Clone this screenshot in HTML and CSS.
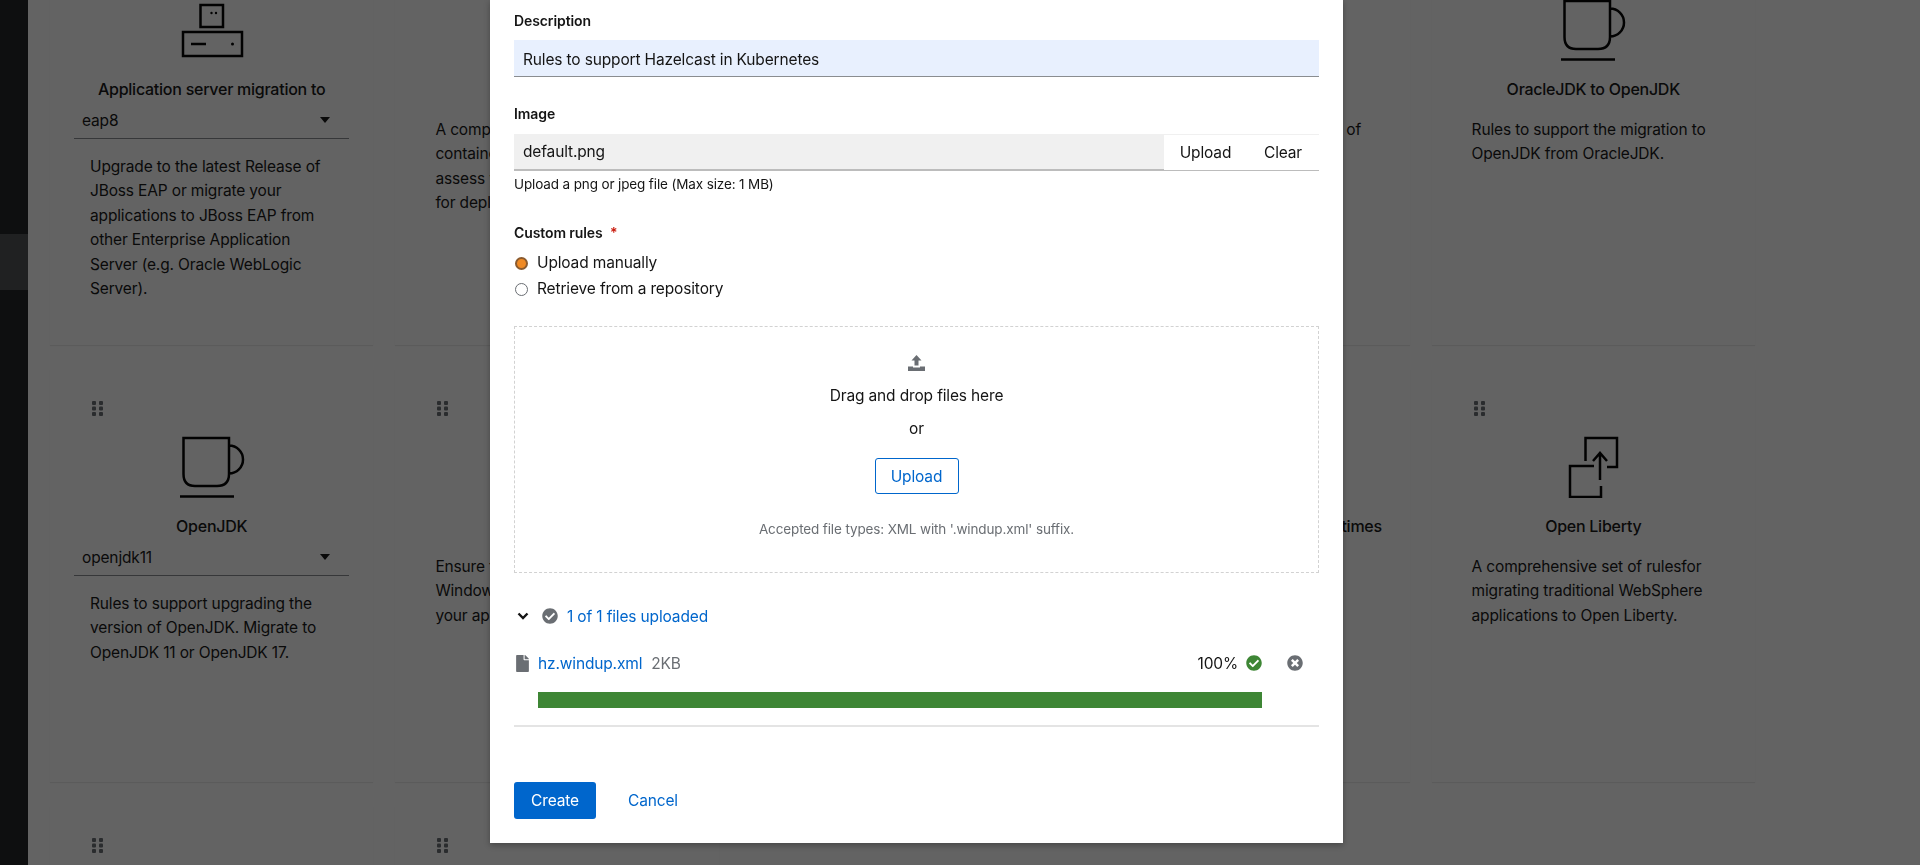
FILE: index.html
```html
<!DOCTYPE html>
<html lang="en">
<head>
    <meta charset="UTF-8">
    <meta name="viewport" content="width=device-width, initial-scale=1.0">
    <title>Create custom migration target</title>
    <link rel="stylesheet" href="styles.css">
</head>
<body>
    <svg class="sprites" width="0" height="0" aria-hidden="true">
        <symbol id="grip" viewBox="0 0 11 15">
            <rect x="0" y="0" width="4" height="4" rx="1"/><rect x="7" y="0" width="4" height="4" rx="1"/>
            <rect x="0" y="5.500" width="4" height="4" rx="1"/><rect x="7" y="5.500" width="4" height="4" rx="1"/>
            <rect x="0" y="11" width="4" height="4" rx="1"/><rect x="7" y="11" width="4" height="4" rx="1"/>
        </symbol>
        <symbol id="cup" viewBox="0 0 66 62">
            <path d="M4.500 2H50V38Q50 50 38 50H16Q4.500 50 4.500 38Z M50 9.500A14 14 0 0 1 50 37.500 M1 60.500H55" fill="none" stroke="#000" stroke-width="2.500"/>
        </symbol>
        <symbol id="server" viewBox="0 0 66 62">
            <path d="M21.500 6H44V28H21.500Z M4 33H63V57H4Z M12 45H27" fill="none" stroke="#000" stroke-width="2.500"/>
            <circle cx="32.500" cy="14" r="1.200"/><circle cx="37" cy="14" r="1.200"/><circle cx="53.500" cy="45" r="1.500"/>
        </symbol>
        <symbol id="liberty" viewBox="0 0 66 62">
            <path d="M25.500 25V2H57V31H47 M34 30H10V61H41V50 M40 44V17 M33 25L40 17L47 25" fill="none" stroke="#000" stroke-width="2.500"/>
        </symbol>
        <symbol id="check-circle" viewBox="0 0 512 512">
            <path d="M504 256c0 136.967-111.033 248-248 248S8 392.967 8 256 119.033 8 256 8s248 111.033 248 248zM227.314 387.314l184-184c6.248-6.248 6.248-16.379 0-22.627l-22.627-22.627c-6.248-6.249-16.379-6.249-22.628 0L216 308.118l-70.059-70.059c-6.248-6.248-16.379-6.248-22.628 0l-22.627 22.627c-6.248 6.248-6.248 16.379 0 22.627l104 104c6.249 6.249 16.379 6.249 22.628.001z"/>
        </symbol>
    </svg>

    <aside class="sidebar">
        <div class="nav-current"></div>
    </aside>

    <main class="gallery">
        <article class="card">
            <svg class="grip"><use href="#grip"/></svg>
            <svg class="card-icon"><use href="#server"/></svg>
            <h3>Application server migration to</h3>
            <div class="card-select"><span>eap8</span><i class="caret"></i></div>
            <p>Upgrade to the latest Release of JBoss EAP or migrate your applications to JBoss EAP from other Enterprise Application Server (e.g. Oracle WebLogic Server).</p>
        </article>
        <article class="card card-covered">
            <svg class="grip"><use href="#grip"/></svg>
            <p>A comprehensive set of<br>containerization rules to<br>assess your applications<br>for deployment on Kubernetes.</p>
        </article>
        <article class="card"></article>
        <article class="card card-covered">
            <svg class="grip"><use href="#grip"/></svg>
            <p>Rules to support the migration of<br>Spring Boot to Quarkus.</p>
        </article>
        <article class="card">
            <svg class="grip"><use href="#grip"/></svg>
            <svg class="card-icon"><use href="#cup"/></svg>
            <h3>OracleJDK to OpenJDK</h3>
            <p>Rules to support the migration to OpenJDK from OracleJDK.</p>
        </article>

        <article class="card">
            <svg class="grip"><use href="#grip"/></svg>
            <svg class="card-icon"><use href="#cup"/></svg>
            <h3>OpenJDK</h3>
            <div class="card-select"><span>openjdk11</span><i class="caret"></i></div>
            <p>Rules to support upgrading the version of OpenJDK. Migrate to OpenJDK 11 or OpenJDK 17.</p>
        </article>
        <article class="card card-covered">
            <svg class="grip"><use href="#grip"/></svg>
            <p>Ensure that no Microsoft<br>Windows paths are hard coded in<br>your applications.</p>
        </article>
        <article class="card"></article>
        <article class="card">
            <svg class="grip"><use href="#grip"/></svg>
            <svg class="card-icon"><use href="#cup"/></svg>
            <h3>Upgrade to Red Hat JBoss Runtimes</h3>
            <p>Rules to support migrating the<br>latest versions of<br>frameworks and<br>workloads to be containerized</p>
        </article>
        <article class="card">
            <svg class="grip"><use href="#grip"/></svg>
            <svg class="card-icon"><use href="#liberty"/></svg>
            <h3>Open Liberty</h3>
            <p>A comprehensive set of rulesfor migrating traditional WebSphere applications to Open Liberty.</p>
        </article>

        <article class="card">
            <svg class="grip"><use href="#grip"/></svg>
        </article>
        <article class="card">
            <svg class="grip"><use href="#grip"/></svg>
        </article>
    </main>

    <div class="backdrop"></div>

    <section class="modal">
        <label class="field-label label-first" for="description">Description</label>
        <input class="text-input autofilled" id="description" type="text" value="Rules to support Hazelcast in Kubernetes">

        <label class="field-label label-image" for="image">Image</label>
        <div class="file-field">
            <input class="file-name" id="image" type="text" value="default.png" readonly>
            <button class="plain-btn upload-btn" type="button">Upload</button>
            <button class="plain-btn clear-btn" type="button">Clear</button>
        </div>
        <div class="helper">Upload a png or jpeg file (Max size: 1 MB)</div>

        <div class="field-label">Custom rules <span class="required">*</span></div>
        <div class="radios">
            <label class="radio"><input type="radio" name="source" checked> Upload manually</label>
            <label class="radio"><input type="radio" name="source"> Retrieve from a repository</label>
        </div>

        <div class="dropzone">
            <svg class="drop-icon" viewBox="0 0 17 16">
                <path d="M8.500 0L13.500 5.500H10.500V10.500H6.500V5.500H3.500Z M0 16V11.500H5V12.500H12V11.500H17V16Z"/>
            </svg>
            <div class="drop-title">Drag and drop files here</div>
            <div class="drop-or">or</div>
            <button class="outline-btn" type="button">Upload</button>
            <div class="drop-hint">Accepted file types: XML with '.windup.xml' suffix.</div>
        </div>

        <div class="upload-status">
            <svg class="chevron" viewBox="0 0 12 8"><path d="M1.500 1.500L6 6L10.500 1.500" fill="none" stroke="#151515" stroke-width="2.400"/></svg>
            <svg class="status-icon grey"><use href="#check-circle"/></svg>
            <a href="#">1 of 1 files uploaded</a>
        </div>

        <div class="file-row">
            <svg class="file-icon" viewBox="0 0 384 512"><path d="M224 136V0H24C10.700 0 0 10.700 0 24v464c0 13.300 10.700 24 24 24h336c13.300 0 24-10.700 24-24V160H248c-13.200 0-24-10.800-24-24zm160-14.100v6.100H256V0h6.100c6.400 0 12.500 2.500 17 7l97.900 98c4.500 4.500 7 10.600 7 16.900z"/></svg>
            <a href="#">hz.windup.xml</a>
            <span class="file-size">2KB</span>
            <span class="file-percent">100%</span>
            <svg class="status-icon green"><use href="#check-circle"/></svg>
            <svg class="status-icon grey remove" viewBox="0 0 512 512"><path d="M256 8C119 8 8 119 8 256s111 248 248 248 248-111 248-248S393 8 256 8zm121.600 313.100c4.700 4.700 4.700 12.300 0 17L338 377.600c-4.700 4.700-12.300 4.700-17 0L256 312l-65.100 65.600c-4.700 4.700-12.300 4.700-17 0L134.400 338c-4.700-4.700-4.700-12.300 0-17l65.600-65-65.600-65.100c-4.700-4.700-4.700-12.300 0-17l39.600-39.600c4.700-4.700 12.300-4.700 17 0l65 65.700 65.100-65.600c4.700-4.700 12.300-4.700 17 0l39.600 39.600c4.700 4.700 4.700 12.300 0 17L312 256l65.600 65.100z"/></svg>
        </div>
        <div class="progress"><div class="progress-fill"></div></div>
        <hr class="divider">

        <div class="actions">
            <button class="primary-btn" type="button">Create</button>
            <a class="cancel" href="#">Cancel</a>
        </div>
    </section>
</body>
</html>
```

FILE: styles.css
```css
* {
    box-sizing: border-box;
}

html, body {
    height: 100%;
    overflow: hidden;
}

body {
    margin: 0;
    display: flex;
    font-family: "Inter", "Liberation Sans", sans-serif;
    font-size: 15.5px;
    letter-spacing: -0.15px;
    color: #151515;
    background-color: #fff;
}

input, button {
    letter-spacing: inherit;
}

.sprites {
    position: absolute;
}

/* Sidebar */
.sidebar {
    width: 28px;
    flex-shrink: 0;
    background-color: #212427;
    padding-top: 234px;
}

.nav-current {
    height: 56px;
    background-color: #4f5255;
}

/* Scrolled card gallery behind the modal */
.gallery {
    display: grid;
    grid-template-columns: repeat(5, 323.4px);
    grid-auto-rows: 413px;
    gap: 24px 22px;
    margin-top: -68px;
    padding-left: 22px;
    align-content: start;
}

.card {
    display: flex;
    flex-direction: column;
    padding: 32px 24px 0;
    background-color: #fff;
    box-shadow: 0 1px 1px rgba(3, 3, 3, 0.08);
}

.grip {
    width: 11px;
    height: 15px;
    margin-left: 18px;
    fill: #6a6e73;
    flex-shrink: 0;
}

.card-icon {
    width: 66px;
    height: 62px;
    margin: 20px auto 0;
    flex-shrink: 0;
}

.card h3 {
    margin: 16px 0 1px;
    font-size: 16px;
    line-height: 24px;
    font-weight: 500;
    text-align: center;
    letter-spacing: -0.25px;
    white-space: nowrap;
}

.card-select {
    display: flex;
    align-items: center;
    justify-content: space-between;
    height: 37px;
    padding: 0 19px 0 8px;
    border-bottom: 1px solid #8a8d90;
}

.caret {
    width: 0;
    height: 0;
    border-left: 5px solid transparent;
    border-right: 5px solid transparent;
    border-top: 6px solid #151515;
}

.card p {
    margin: 16px 0 0;
    padding: 0 16px;
    line-height: 24.4px;
}

/* only the description of these shows next to the modal */
.card-covered p {
    margin-top: 139px;
}

/* Backdrop and modal */
.backdrop {
    position: fixed;
    top: 0;
    left: 0;
    right: 0;
    bottom: 0;
    background-color: rgba(3, 3, 3, 0.62);
}

.modal {
    position: fixed;
    top: 0;
    left: 490px;
    width: 853px;
    height: 843px;
    padding: 0 24px;
    overflow: hidden;
    background-color: #fff;
    box-shadow: 0 2px 6px rgba(3, 3, 3, 0.3);
}

.field-label {
    display: block;
    margin: 26px 0 9px;
    font-size: 14px;
    line-height: 21px;
    font-weight: 600;
    letter-spacing: -0.1px;
}

.label-first {
    margin-top: 10px;
}

.label-image {
    margin-bottom: 10px;
}

.required {
    margin-left: 4px;
    color: #c9190b;
}

.text-input {
    display: block;
    width: 100%;
    height: 37px;
    padding: 2px 9px 0;
    border: 0;
    border-bottom: 1px solid #8a8d90;
    border-radius: 0;
    font: inherit;
    color: #151515;
}

.autofilled {
    background-color: #e8f0fe;
}

.file-field {
    display: flex;
    height: 37px;
    background-color: #f0f0f0;
    border-bottom: 2px solid #bcbcbc;
}

.file-name {
    flex: 1;
    min-width: 0;
    padding: 0 9px;
    border: 0;
    background: transparent;
    font: inherit;
    color: #151515;
}

.plain-btn {
    height: 100%;
    margin-top: 1px;
    padding: 0;
    border: 0;
    background-color: #fff;
    font: inherit;
    color: #151515;
}

.upload-btn {
    width: 83px;
}

.clear-btn {
    width: 72px;
}

.helper {
    margin-top: 3px;
    font-size: 13.5px;
    line-height: 21px;
    letter-spacing: -0.13px;
}

.helper + .field-label {
    margin-top: 27px;
    margin-bottom: 8px;
}

.radios {
    display: flex;
    flex-direction: column;
    gap: 2px;
}

.radio {
    display: flex;
    align-items: center;
    gap: 9px;
    height: 24px;
    line-height: 24px;
}

.radio input {
    appearance: none;
    width: 13px;
    height: 13px;
    margin: 0 0 0 1px;
    border: 1px solid #6a6e73;
    border-radius: 50%;
    background-color: #fff;
}

.radio input:checked {
    border: 2px solid #8a5a2e;
    background-color: #f08a24;
}

.dropzone {
    display: flex;
    flex-direction: column;
    align-items: center;
    height: 247px;
    margin-top: 25px;
    padding-top: 28px;
    border: 1px dashed #d2d2d2;
}

.drop-icon {
    width: 17px;
    height: 16px;
    fill: #6a6e73;
    flex-shrink: 0;
}

.drop-title {
    margin-top: 13px;
    line-height: 24px;
}

.drop-or {
    margin-top: 9px;
    line-height: 24px;
}

.outline-btn {
    width: 84px;
    height: 36px;
    margin-top: 17px;
    padding: 0;
    border: 1px solid #06c;
    border-radius: 3px;
    background-color: #fff;
    font: inherit;
    color: #06c;
}

.drop-hint {
    margin-top: 25px;
    font-size: 13.5px;
    line-height: 21px;
    letter-spacing: -0.13px;
    color: #6a6e73;
}

a {
    color: #06c;
    text-decoration: none;
}

.upload-status {
    display: flex;
    align-items: center;
    height: 24px;
    margin-top: 31px;
}

.chevron {
    width: 12px;
    height: 8px;
    margin-left: 3px;
    margin-right: 13px;
}

.status-icon {
    width: 16px;
    height: 16px;
    flex-shrink: 0;
}

.status-icon.grey {
    fill: #6a6e73;
}

.status-icon.green {
    fill: #3e8635;
    margin-left: 8px;
}

.upload-status .status-icon {
    margin-right: 9px;
}

.file-row {
    display: flex;
    align-items: center;
    height: 24px;
    margin-top: 23px;
    padding-right: 16px;
}

.file-icon {
    width: 13px;
    height: 17px;
    margin: 0 9px 0 2px;
    fill: #6a6e73;
}

.file-size {
    margin-left: 9px;
    color: #6a6e73;
}

.file-percent {
    margin-left: auto;
}

.remove {
    margin-left: 25px;
}

.progress {
    height: 16px;
    margin: 17px 57px 0 24px;
}

.progress-fill {
    height: 100%;
    width: 100%;
    background-color: #3e8635;
}

.divider {
    height: 2px;
    margin: 17px 0 0;
    border: 0;
    background-color: #e4e4e4;
}

.actions {
    display: flex;
    align-items: center;
    margin-top: 55px;
}

.primary-btn {
    width: 82px;
    height: 37px;
    padding: 0;
    border: 0;
    border-radius: 3px;
    background-color: #06c;
    font: inherit;
    color: #fff;
}

.cancel {
    margin-left: 32px;
}
```
